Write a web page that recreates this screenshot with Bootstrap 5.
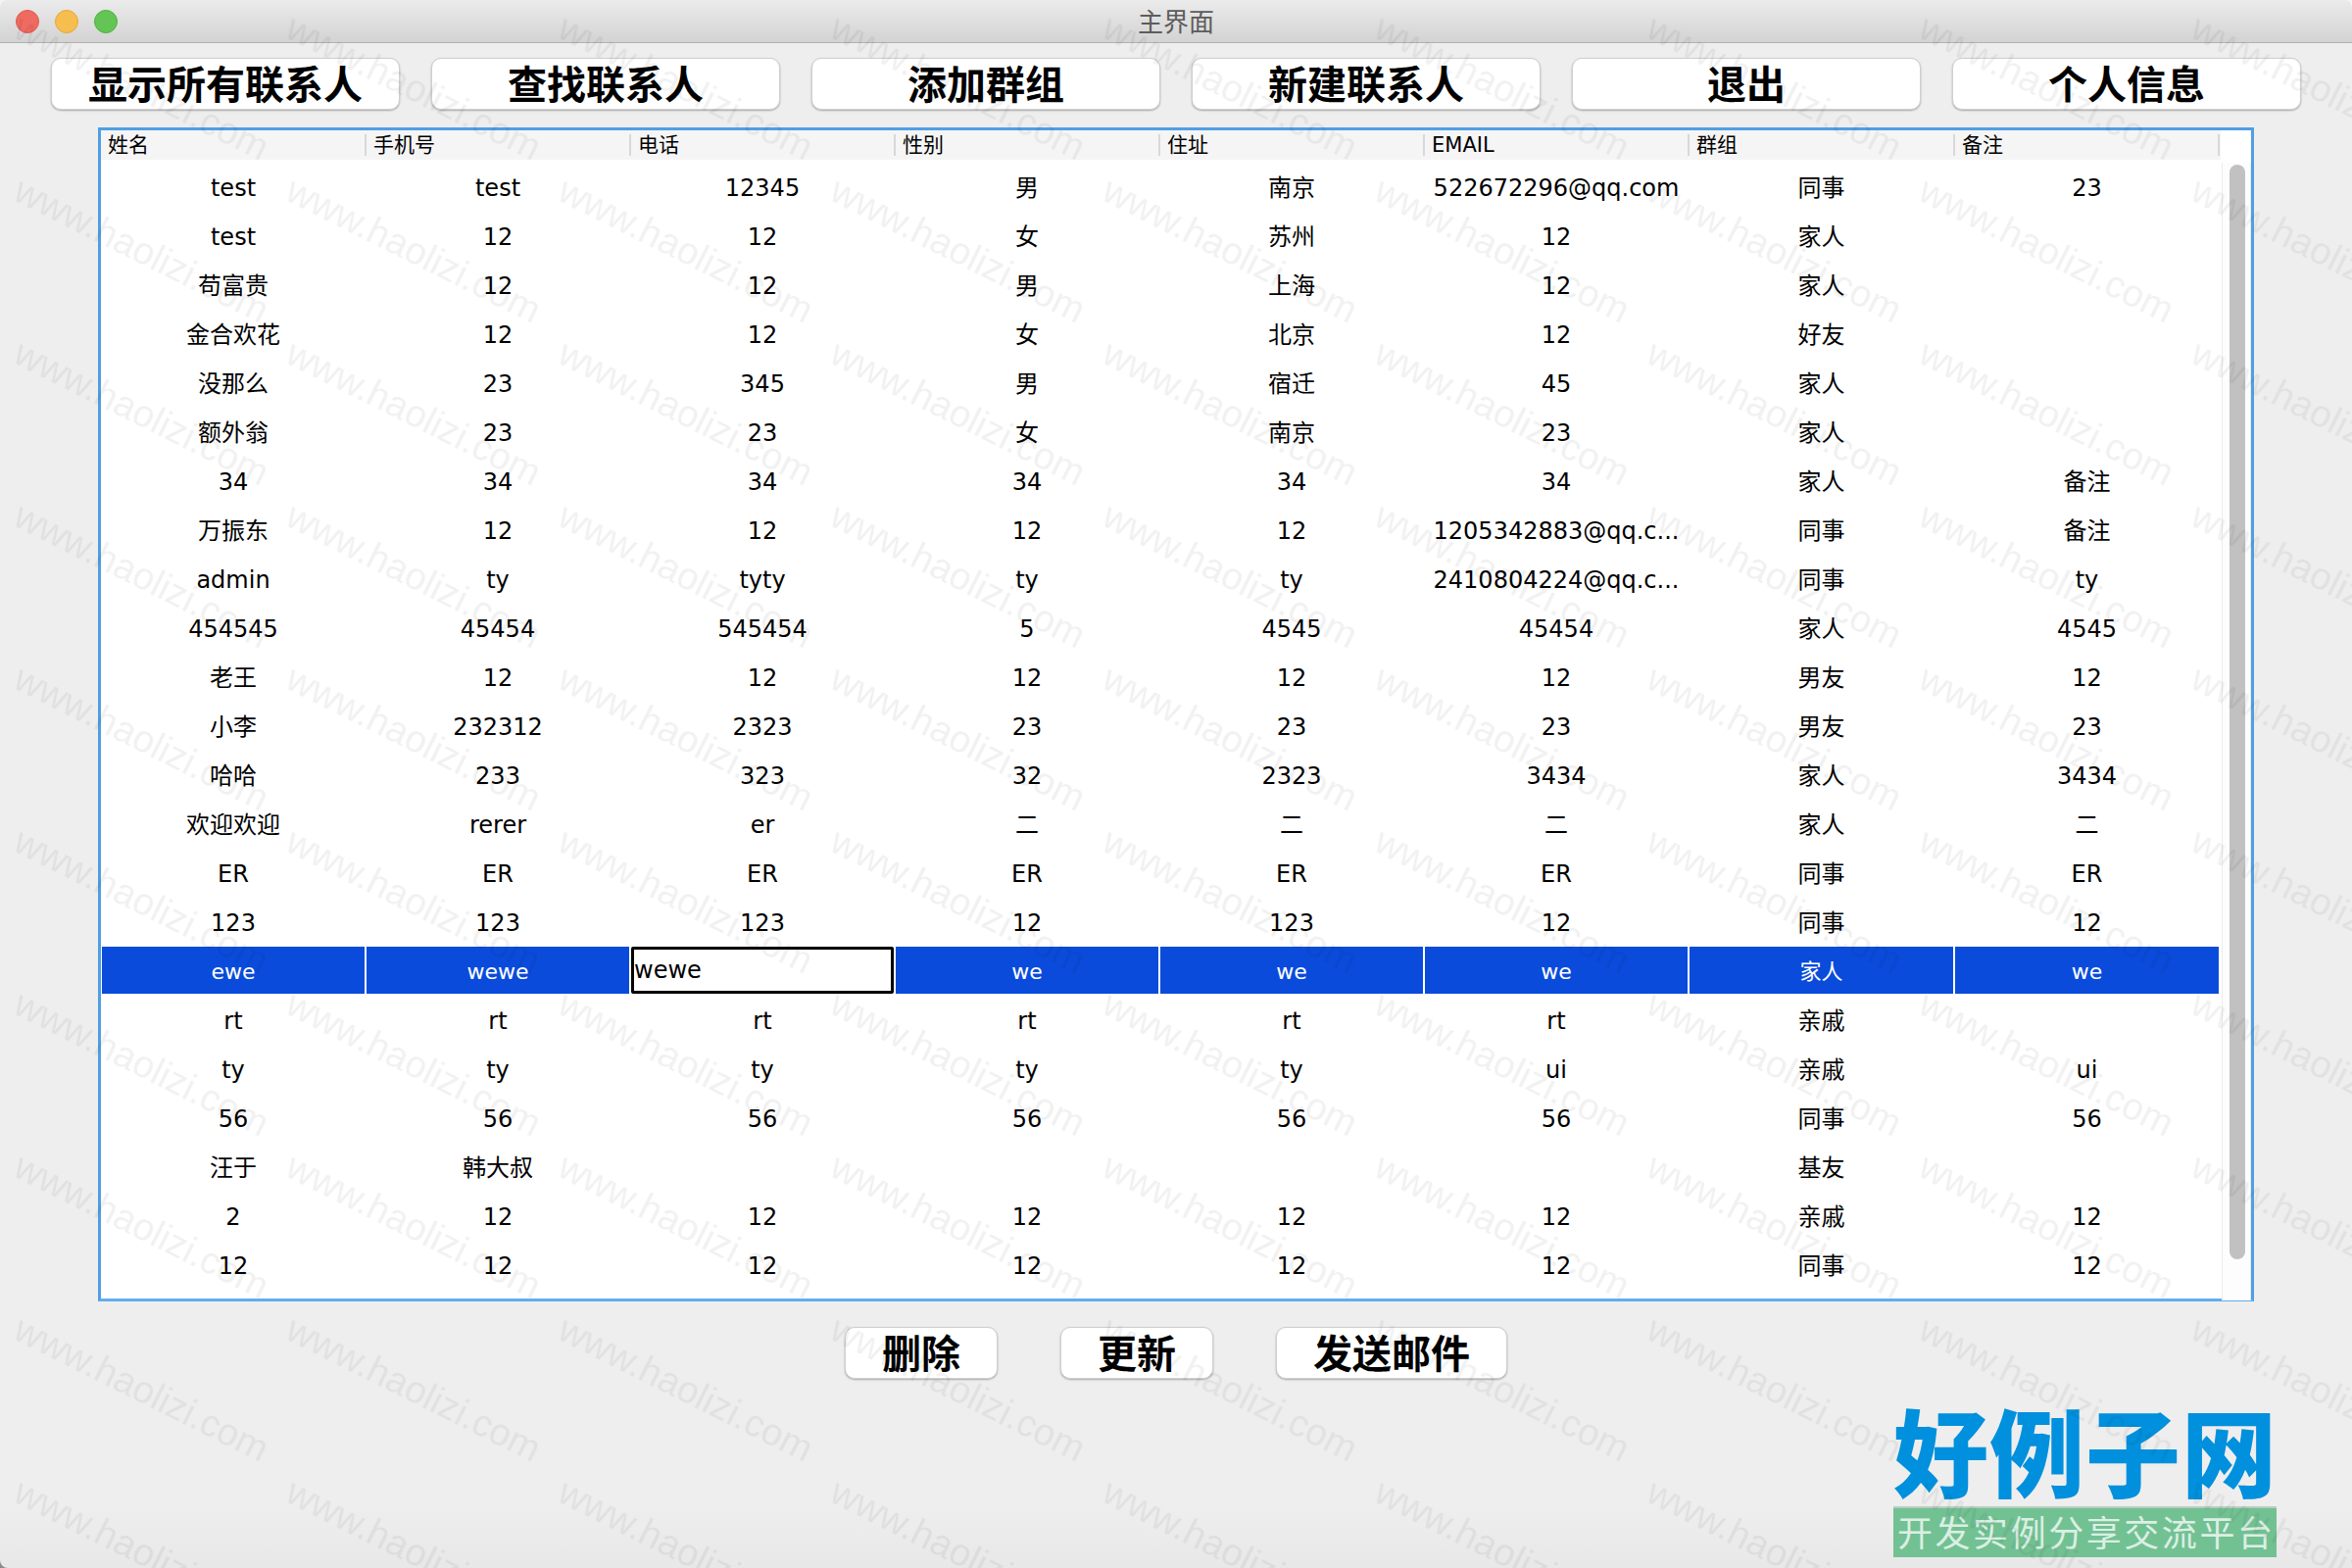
<!DOCTYPE html>
<html lang="zh-CN">
<head>
    <meta charset="UTF-8">
    <title>主界面</title>
    <link rel="stylesheet" href="https://cdn.jsdelivr.net/npm/bootstrap@5.3.0/dist/css/bootstrap.min.css">
    <style>
        html, body { height: 1600px; overflow: hidden; }
        body { background: linear-gradient(#f4f4f4 50%, #8a8a8a 50%); }
        .app-window {
            height: 1600px; border-radius: 8px 8px 0 8px; overflow: hidden;
            background: linear-gradient(#eeeeee 96%, #e8e8e8);
            font-family: "DejaVu Sans", "Noto Sans CJK SC", sans-serif;
        }
        .title-bar {
            display: grid; grid-template-columns: 1fr auto 1fr; align-items: center;
            height: 44px; padding: 0 16px;
            background: linear-gradient(#ebebeb, #d3d3d3);
            border-bottom: 1px solid #b1b1b1;
        }
        .title-text { padding-bottom: 2px; font: 26px "Noto Sans CJK SC", sans-serif; color: #5c5c5c; }
        .light { width: 24px; height: 24px; border-radius: 50%; }
        .light-red { background: #ef6a60; border: 1px solid #df5a50; }
        .light-yellow { background: #f6bd4f; border: 1px solid #e4a93b; }
        .light-green { background: #62c554; border: 1px solid #52b044; }

        .tool-btn {
            height: 53px; padding: 0 0 4px; border-radius: 10px; background: #fff;
            border: 1px solid #cfcfcf; box-shadow: 0 1px 2px rgba(0, 0, 0, .3);
            font: 700 40px/1 "Noto Sans CJK SC", sans-serif; color: #000;
        }
        .top-tools { gap: 32px; padding: 15px 52px 0; }
        .top-tools .tool-btn { width: 356px; }
        .bottom-tools { gap: 64px; margin-top: 26px; }
        .w-small { width: 156px; }
        .w-mail { width: 236px; }

        .table-panel {
            width: 2200px; height: 1198px; margin: 18px 0 0 100px;
            background: #fff; border: 3px solid #509fe3; border-bottom-color: #60adf0;
        }
        .table-side { width: 2164px; flex: none; }
        .grid-table { table-layout: fixed; width: 2163px; border-collapse: separate; border-spacing: 0; margin: 0; background: transparent; }
        .grid-table col { width: 270px; }
        .grid-table col:first-child { width: 271px; }
        .grid-table col.col-wide { width: 271px; }
        .grid-table th {
            height: 30px; padding: 0 0 0 7px; border: 0;
            font-size: 21px; font-weight: 400; line-height: 30px; color: #000; white-space: nowrap;
            background: #f5f5f5 linear-gradient(#d8d8d8, #d8d8d8) no-repeat right center / 2px 22px;
        }
        .grid-table th:last-child { background-position: right 1px center; }
        .grid-table tbody::before { content: ""; display: block; height: 3px; }
        .grid-table td {
            height: 50px; padding: 4px 0 0; border: 0; border-bottom: 2px solid transparent; border-right: 2px solid transparent;
            background: transparent; background-clip: padding-box;
            font-size: 24px; line-height: 1; text-align: center; vertical-align: middle; color: #000; white-space: nowrap;
        }
        .grid-table td:first-child { border-left: 1px solid transparent; }
        .grid-table .row-picked td { background-color: #0a4bdb; color: #fff; font-size: 22px; }
        .grid-table .row-picked td.cell-edit { background-color: #fff; padding: 0; }
        .cell-input {
            display: block; width: 268px; height: 48px; padding: 0;
            border: 3px solid #000; border-radius: 2px;
            font: 24px "DejaVu Sans", sans-serif; color: #000; background: #fff; outline: 0;
        }
        .scroll-track {
            width: 30px; height: 1161px; margin-top: 33px; padding: 2px 5px 0 7px;
            border-left: 1px solid #ececec; border-right: 1px solid #ececec; background: #fdfdfd;
        }
        .scroll-thumb { width: 16px; height: 1117px; border-radius: 8px; background: #c1c1c1; }

        .logo-row { justify-content: flex-end; padding-right: 77px; margin-top: 20px; }
        .logo-box { width: 391px; }
        .logo-main {
            display: flex; justify-content: space-between; height: 110px;
            font: 900 97px/102px "Noto Sans CJK SC", sans-serif; color: #0090dd;
        }
        .logo-sub {
            display: flex; justify-content: space-between; height: 52px; padding: 0 4px;
            background: #72c193; border-top: 2px solid #b9cdbf;
            font: 36px/46px "Noto Sans CJK SC", sans-serif; color: rgba(255, 255, 255, .75);
        }
        .watermark { pointer-events: none; }
        .watermark text { font: 38.5px "Liberation Sans", sans-serif; fill: #000; fill-opacity: .055; }
    </style>
</head>
<body class="position-relative">
    <div class="app-window">
        <div class="title-bar">
            <div class="d-flex" style="gap:16px">
                <span class="light light-red"></span>
                <span class="light light-yellow"></span>
                <span class="light light-green"></span>
            </div>
            <div class="title-text">主界面</div>
            <div></div>
        </div>

        <!-- top buttons -->
        <div class="d-flex top-tools">
            <button class="btn tool-btn">显示所有联系人</button>
            <button class="btn tool-btn">查找联系人</button>
            <button class="btn tool-btn">添加群组</button>
            <button class="btn tool-btn">新建联系人</button>
            <button class="btn tool-btn">退出</button>
            <button class="btn tool-btn">个人信息</button>
        </div>

        <!-- contact table -->
        <div class="d-flex table-panel">
            <div class="table-side">
                <table class="table grid-table">
                    <colgroup><col><col><col><col><col><col><col class="col-wide"><col class="col-wide"></colgroup>
                    <thead>
                        <tr><th>姓名</th><th>手机号</th><th>电话</th><th>性别</th><th>住址</th><th>EMAIL</th><th>群组</th><th>备注</th></tr>
                    </thead>
                    <tbody id="contactRows"></tbody>
                </table>
            </div>
            <div class="scroll-track"><div class="scroll-thumb"></div></div>
        </div>

        <div class="d-flex justify-content-center bottom-tools">
            <button class="btn tool-btn w-small">删除</button>
            <button class="btn tool-btn w-small">更新</button>
            <button class="btn tool-btn w-mail">发送邮件</button>
        </div>

        <div class="d-flex logo-row">
            <div class="logo-box">
                <div class="logo-main"><span>好</span><span>例</span><span>子</span><span>网</span></div>
                <div class="logo-sub"><span>开</span><span>发</span><span>实</span><span>例</span><span>分</span><span>享</span><span>交</span><span>流</span><span>平</span><span>台</span></div>
            </div>
        </div>
    </div>

    <!-- watermark over the whole picture -->
    <svg class="watermark position-absolute top-0 start-0 w-100 h-100" xmlns="http://www.w3.org/2000/svg">
        <defs>
            <pattern id="wm" width="277.7" height="166" patternUnits="userSpaceOnUse">
                <text x="11.5" y="37" transform="rotate(26.6 11.5 37)">www.haolizi.com</text>
            </pattern>
        </defs>
        <rect width="100%" height="100%" fill="url(#wm)"></rect>
    </svg>

    <script src="https://cdn.jsdelivr.net/npm/bootstrap@5.3.0/dist/js/bootstrap.bundle.min.js"></script>
    <script>
        const contacts = [
            ['test', 'test', '12345', '男', '南京', '522672296@qq.com', '同事', '23'],
            ['test', '12', '12', '女', '苏州', '12', '家人', ''],
            ['苟富贵', '12', '12', '男', '上海', '12', '家人', ''],
            ['金合欢花', '12', '12', '女', '北京', '12', '好友', ''],
            ['没那么', '23', '345', '男', '宿迁', '45', '家人', ''],
            ['额外翁', '23', '23', '女', '南京', '23', '家人', ''],
            ['34', '34', '34', '34', '34', '34', '家人', '备注'],
            ['万振东', '12', '12', '12', '12', '1205342883@qq.c...', '同事', '备注'],
            ['admin', 'ty', 'tyty', 'ty', 'ty', '2410804224@qq.c...', '同事', 'ty'],
            ['454545', '45454', '545454', '5', '4545', '45454', '家人', '4545'],
            ['老王', '12', '12', '12', '12', '12', '男友', '12'],
            ['小李', '232312', '2323', '23', '23', '23', '男友', '23'],
            ['哈哈', '233', '323', '32', '2323', '3434', '家人', '3434'],
            ['欢迎欢迎', 'rerer', 'er', '二', '二', '二', '家人', '二'],
            ['ER', 'ER', 'ER', 'ER', 'ER', 'ER', '同事', 'ER'],
            ['123', '123', '123', '12', '123', '12', '同事', '12'],
            ['ewe', 'wewe', 'wewe', 'we', 'we', 'we', '家人', 'we'],
            ['rt', 'rt', 'rt', 'rt', 'rt', 'rt', '亲戚', ''],
            ['ty', 'ty', 'ty', 'ty', 'ty', 'ui', '亲戚', 'ui'],
            ['56', '56', '56', '56', '56', '56', '同事', '56'],
            ['汪于', '韩大叔', '', '', '', '', '基友', ''],
            ['2', '12', '12', '12', '12', '12', '亲戚', '12'],
            ['12', '12', '12', '12', '12', '12', '同事', '12']
        ];
        const pickedRow = 16;

        // Fill the table
        document.getElementById('contactRows').innerHTML = contacts.map((row, r) => {
            const cells = row.map((text, c) => {
                if (r === pickedRow && c === 2) {
                    return `<td class="cell-edit"><input class="cell-input" type="text" value="${text}"></td>`;
                }
                return `<td>${text}</td>`;
            }).join('');
            return `<tr class="${r === pickedRow ? 'row-picked' : ''}">${cells}</tr>`;
        }).join('');
    </script>
</body>
</html>
